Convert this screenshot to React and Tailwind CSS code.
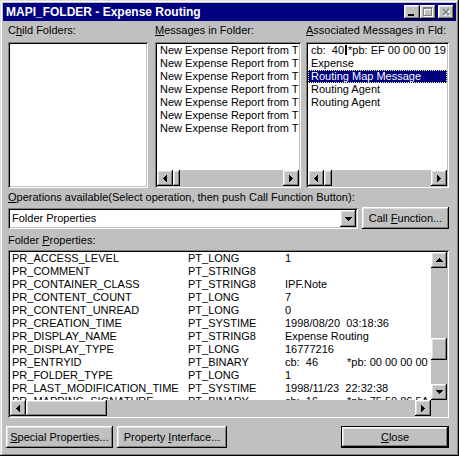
import React from 'react';

const raised = 'shadow-[inset_-1px_-1px_0_#000000,inset_1px_1px_0_#ffffff,inset_-2px_-2px_0_#808080,inset_2px_2px_0_#dfdfdf]';
const sunken = 'shadow-[inset_1px_1px_0_#808080,inset_-1px_-1px_0_#ffffff,inset_2px_2px_0_#000000,inset_-2px_-2px_0_#c0c0c0]';

// pixel triangles for scroll / combo arrows
function Arrow({ dir }) {
  const rows = [0, 1, 2, 3];
  if (dir === 'up' || dir === 'down') {
    return (
      <svg width="7" height="4" shapeRendering="crispEdges">
        {rows.map((i) => {
          const y = dir === 'up' ? i : 3 - i;
          return <rect key={i} x={3 - i} y={y} width={i * 2 + 1} height="1" fill="#000" />;
        })}
      </svg>
    );
  }
  return (
    <svg width="4" height="7" shapeRendering="crispEdges">
      {rows.map((i) => {
        const x = dir === 'left' ? i : 3 - i;
        return <rect key={i} x={x} y={3 - i} width="1" height={i * 2 + 1} fill="#000" />;
      })}
    </svg>
  );
}

function ArrowBtn({ dir }) {
  return (
    <div className={`w-[16px] h-[16px] shrink-0 bg-[#c0c0c0] flex items-center justify-center ${raised}`}>
      <Arrow dir={dir} />
    </div>
  );
}

function HScroll({ thumb, className = '' }) {
  return (
    <div className={`flex h-[16px] shrink-0 bg-[#c0c0c0] ${className}`}>
      <ArrowBtn dir="left" />
      <div className={`h-[16px] shrink-0 bg-[#c0c0c0] ${raised} ${thumb}`} />
      <div className="flex-1" />
      <ArrowBtn dir="right" />
    </div>
  );
}

function TitleButtons() {
  return (
    <div className="flex items-center">
      <div className={`w-[16px] h-[14px] bg-[#c0c0c0] ${raised}`}>
        <svg width="16" height="14" shapeRendering="crispEdges">
          <rect x="4" y="9" width="6" height="2" fill="#000" />
        </svg>
      </div>
      <div className={`w-[16px] h-[14px] bg-[#c0c0c0] ${raised}`}>
        <svg width="16" height="14" shapeRendering="crispEdges">
          <g fill="#ffffff" transform="translate(1,1)">
            <rect x="3" y="2" width="9" height="2" />
            <rect x="3" y="2" width="1" height="9" />
            <rect x="11" y="2" width="1" height="9" />
            <rect x="3" y="10" width="9" height="1" />
          </g>
          <g fill="#808080">
            <rect x="3" y="2" width="9" height="2" />
            <rect x="3" y="2" width="1" height="9" />
            <rect x="11" y="2" width="1" height="9" />
            <rect x="3" y="10" width="9" height="1" />
          </g>
        </svg>
      </div>
      <div className={`ml-[2px] w-[16px] h-[14px] bg-[#c0c0c0] ${raised}`}>
        <svg width="16" height="14">
          <path d="M5 4 L11 10 M11 4 L5 10" stroke="#ffffff" strokeWidth="1.6" transform="translate(1,1)" />
          <path d="M5 4 L11 10 M11 4 L5 10" stroke="#808080" strokeWidth="1.6" />
        </svg>
      </div>
    </div>
  );
}

function Button({ children, className = '', def = false }) {
  if (def) {
    return (
      <div className={`border border-black ${className}`}>
        <div className={`h-full bg-[#c0c0c0] flex items-center justify-center ${raised}`}>
          <span>{children}</span>
        </div>
      </div>
    );
  }
  return (
    <div className={`bg-[#c0c0c0] flex items-center justify-center ${raised} ${className}`}>
      <span>{children}</span>
    </div>
  );
}

const messages = Array.from({ length: 7 }, () => 'New Expense Report from The Routing Agent');

const props = [
  ['PR_ACCESS_LEVEL', 'PT_LONG', '1'],
  ['PR_COMMENT', 'PT_STRING8', ''],
  ['PR_CONTAINER_CLASS', 'PT_STRING8', 'IPF.Note'],
  ['PR_CONTENT_COUNT', 'PT_LONG', '7'],
  ['PR_CONTENT_UNREAD', 'PT_LONG', '0'],
  ['PR_CREATION_TIME', 'PT_SYSTIME', '1998/08/20  03:18:36'],
  ['PR_DISPLAY_NAME', 'PT_STRING8', 'Expense Routing'],
  ['PR_DISPLAY_TYPE', 'PT_LONG', '16777216'],
  ['PR_ENTRYID', 'PT_BINARY', 'cb:  46', '*pb: 00 00 00 00 00 00 00 00'],
  ['PR_FOLDER_TYPE', 'PT_LONG', '1'],
  ['PR_LAST_MODIFICATION_TIME', 'PT_SYSTIME', '1998/11/23  22:32:38'],
  ['PR_MAPPING_SIGNATURE', 'PT_BINARY', 'cb:  16', '*pb: 75 50 86 5A 00 00 00 00'],
];

export default function App() {
  return (
    <div className="w-[459px] h-[456px] bg-[#c0c0c0] p-[3px] flex flex-col font-['Liberation_Sans',Arial,sans-serif] text-[11px] leading-[13px] text-black shadow-[inset_-1px_-1px_0_#000000,inset_1px_1px_0_#dfdfdf,inset_-2px_-2px_0_#808080,inset_2px_2px_0_#ffffff]">
      {/* title bar */}
      <div className="h-[18px] shrink-0 bg-[#000080] flex items-center justify-between pl-[3px] pr-[2px]">
        <span className="text-white font-bold text-[12px] whitespace-nowrap">MAPI_FOLDER - Expense Routing</span>
        <TitleButtons />
      </div>

      <div className="flex flex-col pl-[5px] pr-[7px]">
        {/* list labels */}
        <div className="flex mt-[3px] h-[13px] whitespace-nowrap">
          <div className="w-[147px]">C<span className="underline">h</span>ild Folders:</div>
          <div className="w-[151px]"><span className="underline">M</span>essages in Folder:</div>
          <div><span className="underline">A</span>ssociated Messages in Fld:</div>
        </div>

        {/* three list boxes */}
        <div className="flex mt-[5px] h-[146px]">
          <div className={`w-[140px] bg-white ${sunken}`} />

          <div className={`ml-[7px] w-[146px] bg-white p-[2px] ${sunken}`}>
            <div className="flex flex-col h-full">
              <div className="flex-1 overflow-hidden pl-[3px] whitespace-nowrap">
                {messages.map((m, i) => (
                  <div key={i} className="h-[13px]">{m}</div>
                ))}
              </div>
              <HScroll thumb="w-[7px]" />
            </div>
          </div>

          <div className={`ml-[5px] w-[143px] bg-white p-[2px] ${sunken}`}>
            <div className="flex flex-col h-full">
              <div className="flex-1 overflow-hidden whitespace-pre">
                <div className="h-[13px] pl-[3px]">
                  <span>cb:  40</span>
                  <span className="inline-block w-[2px] h-[10px] bg-black mx-[1px] align-[-1px]" />
                  <span>*pb: EF 00 00 00 19 8C 00 00</span>
                </div>
                <div className="h-[13px] pl-[3px]">Expense</div>
                <div className="h-[13px] pl-[2px] bg-[#000080] text-white border border-dotted border-[#ffff7f] leading-[11px]">Routing Map Message</div>
                <div className="h-[13px] pl-[3px]">Routing Agent</div>
                <div className="h-[13px] pl-[3px]">Routing Agent</div>
              </div>
              <HScroll thumb="w-[8px]" />
            </div>
          </div>
        </div>

        {/* operations */}
        <div className="mt-[3px] h-[13px] whitespace-nowrap">
          <span className="underline">O</span>perations available(Select operation, then push Call Function Button):
        </div>
        <div className="flex mt-[3px] h-[22px] items-start">
          <div className={`mt-[1px] w-[350px] h-[21px] bg-white p-[2px] ${sunken}`}>
            <div className="flex h-full">
              <div className="flex-1 pl-[2px] flex items-center">Folder Properties</div>
              <div className={`w-[16px] h-full bg-[#c0c0c0] flex items-center justify-center ${raised}`}>
                <Arrow dir="down" />
              </div>
            </div>
          </div>
          <Button className="ml-[4px] w-[87px] h-[22px]">
            Call <span className="underline">F</span>unction...
          </Button>
        </div>

        {/* folder properties */}
        <div className="mt-[5px] h-[13px]">
          Folder <span className="underline">P</span>roperties:
        </div>
        <div className={`mt-[3px] h-[168px] bg-white p-[2px] ${sunken}`}>
          <div className="flex flex-col h-full">
            <div className="flex flex-1 min-h-0">
              <div className="flex-1 overflow-hidden pl-[2px] whitespace-pre">
                {props.map((p) => (
                  <div key={p[0]} className="flex h-[13px] shrink-0">
                    <span className="w-[176px] shrink-0">{p[0]}</span>
                    <span className="w-[97px] shrink-0">{p[1]}</span>
                    {p[3] ? (
                      <>
                        <span className="w-[62px] shrink-0">{p[2]}</span>
                        <span>{p[3]}</span>
                      </>
                    ) : (
                      <span>{p[2]}</span>
                    )}
                  </div>
                ))}
              </div>
              <div className="w-[16px] flex flex-col bg-[#c0c0c0]">
                <ArrowBtn dir="up" />
                <div className="h-[70px]" />
                <div className={`h-[22px] bg-[#c0c0c0] ${raised}`} />
                <div className="flex-1" />
                <ArrowBtn dir="down" />
              </div>
            </div>
            <div className="flex h-[16px]">
              <HScroll thumb="w-[81px]" className="flex-1" />
              <div className="w-[16px] bg-[#c0c0c0]" />
            </div>
          </div>
        </div>

        {/* bottom buttons */}
        <div className="flex mt-[8px] h-[22px] whitespace-nowrap">
          <Button className="ml-[-2px] w-[107px]">
            <span className="underline">S</span>pecial Properties...
          </Button>
          <Button className="ml-[4px] w-[110px]">
            Property <span className="underline">I</span>nterface...
          </Button>
          <Button def className="ml-auto w-[108px]">
            <span className="underline">C</span>lose
          </Button>
        </div>
      </div>
    </div>
  );
}
